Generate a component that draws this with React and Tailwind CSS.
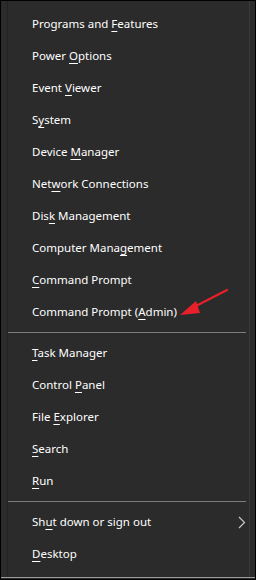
const items1 = [
  ["Programs and ", "F", "eatures"],
  ["Power ", "O", "ptions"],
  ["Event ", "V", "iewer"],
  ["S", "y", "stem"],
  ["Device ", "M", "anager"],
  ["Net", "w", "ork Connections"],
  ["Dis", "k", " Management"],
  ["Computer Mana", "g", "ement"],
  ["", "C", "ommand Prompt"],
  ["Command Prompt (", "A", "dmin)"],
];

const items2 = [
  ["", "T", "ask Manager"],
  ["Control ", "P", "anel"],
  ["File ", "E", "xplorer"],
  ["", "S", "earch"],
  ["", "R", "un"],
];

function Item({ label, children }) {
  const [pre, key, post] = label;
  return (
    <div className="h-8 flex items-center justify-between pl-[24px] pr-[3px] text-[11.5px] text-white">
      <span>
        {pre}
        <span className="underline underline-offset-[3px] decoration-1">{key}</span>
        {post}
      </span>
      {children}
    </div>
  );
}

function Separator() {
  return (
    <div className="h-[9px] pt-[4px]">
      <div className="h-px w-[238px] bg-[#7c7c7c]" />
    </div>
  );
}

export default function App() {
  return (
    <div
      className="relative w-[256px] h-[580px] bg-[#2b2b2b] border border-black overflow-hidden"
      style={{ fontFamily: '"Noto Sans", "Open Sans", sans-serif' }}
    >
      <div className="ml-[6px] w-[243px] h-full border-l border-r border-l-[#232323] border-r-[#3a3a3a] pt-[7px]">
        {items1.map((it) => (
          <Item key={it.join("")} label={it} />
        ))}
        <Separator />
        {items2.map((it) => (
          <Item key={it.join("")} label={it} />
        ))}
        <Separator />
        <Item label={["Sh", "u", "t down or sign out"]}>
          <svg width="8" height="13" viewBox="0 0 8 13" fill="none">
            <polyline points="1,1 6.5,6.5 1,12" stroke="#c8c8c8" strokeWidth="1.2" />
          </svg>
        </Item>
        <Item label={["", "D", "esktop"]} />
      </div>
      <div className="absolute left-0 right-0 bottom-[1px] h-px bg-[#9a9a9a]" />
      <svg className="absolute left-0 top-0" width="256" height="580" viewBox="0 0 256 580">
        <line x1="226" y1="289" x2="191" y2="307" stroke="#e8202a" strokeWidth="2.2" strokeLinecap="round" />
        <polygon points="179,314 195,300 199,312" fill="#e8202a" />
      </svg>
    </div>
  );
}
